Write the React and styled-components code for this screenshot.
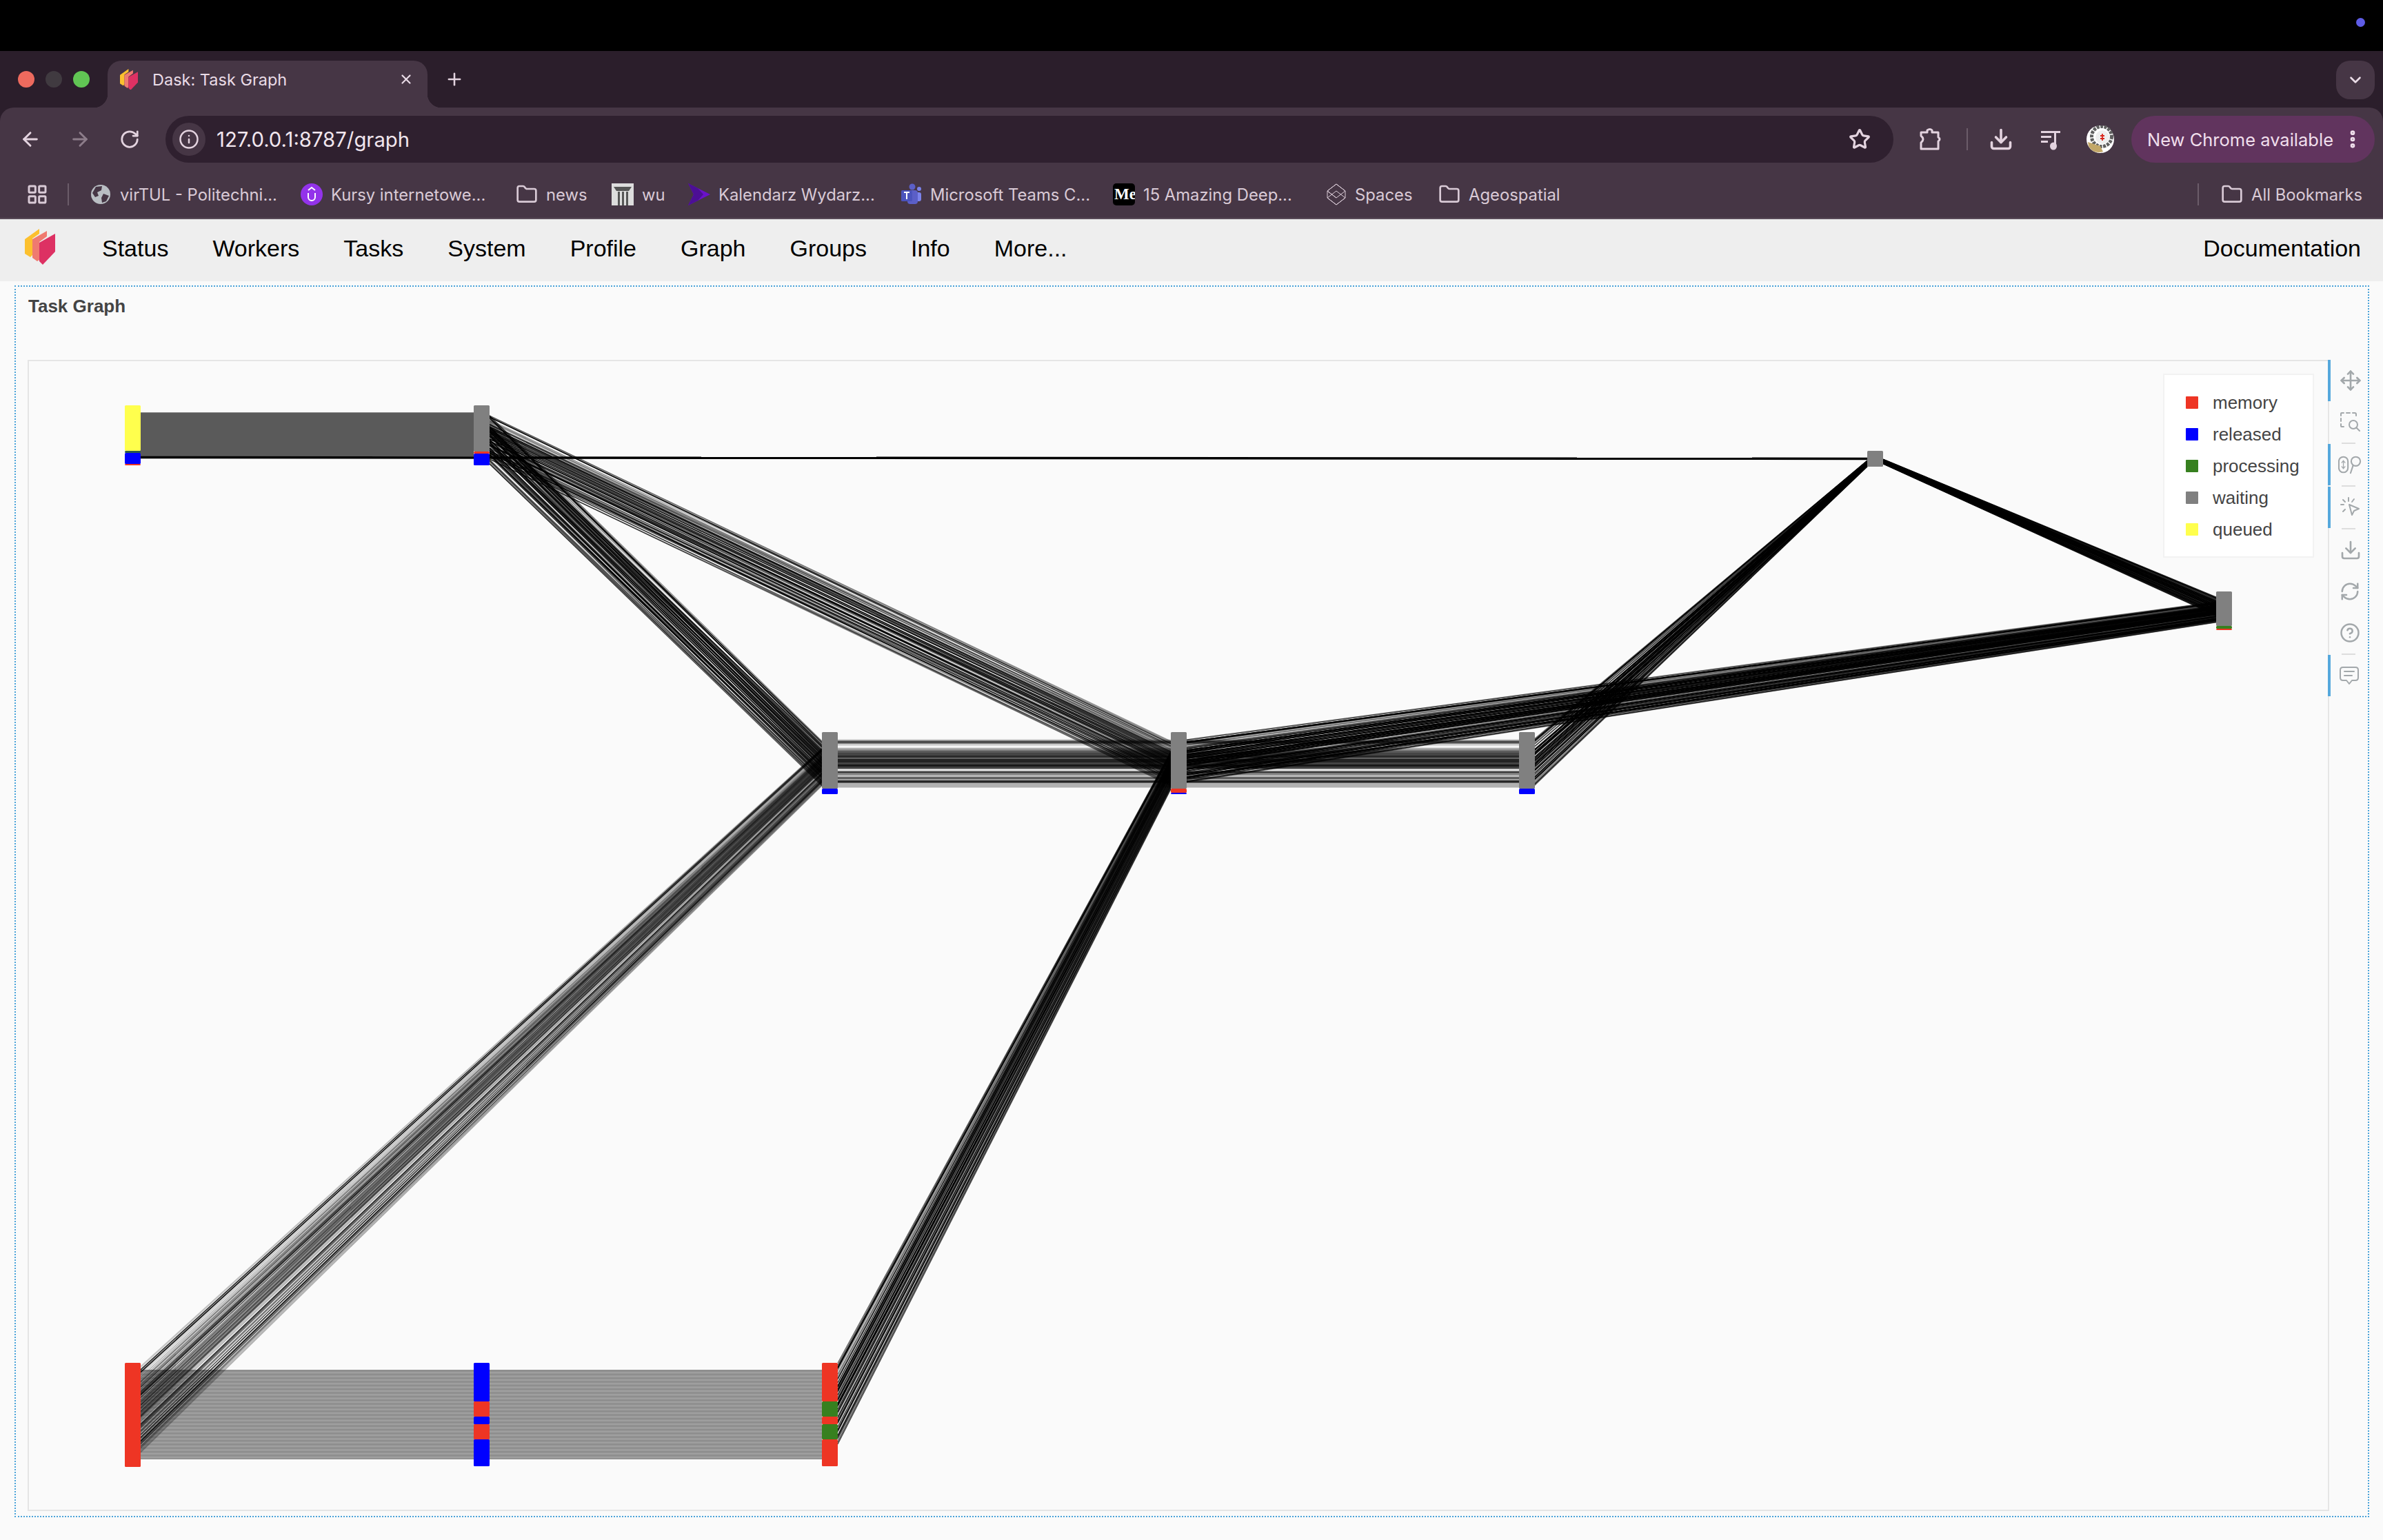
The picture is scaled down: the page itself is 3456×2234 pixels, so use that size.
import React from "react";
import styled, { createGlobalStyle } from "styled-components";
import {
  ArrowLeft,
  ArrowRight,
  RotateCw,
  Info,
  Star,
  Download,
  EllipsisVertical,
  ChevronDown,
  X,
  Plus,
  Folder,
  LayoutGrid,
  Move,
  RefreshCw,
  CircleHelp,
} from "lucide-react";

const CHROME_FONT = `Inter, "Liberation Sans", sans-serif`;
const PAGE_FONT = `"Liberation Sans", Arial, sans-serif`;

const GlobalStyle = createGlobalStyle`
  html, body {
    margin: 0;
    padding: 0;
    background: #fafafa;
    overflow: hidden;
  }
`;

const Screen = styled.div`
  width: 3456px;
  height: 2234px;
  display: flex;
  flex-direction: column;
  background: #fafafa;
`;

const MenuBar = styled.div`
  height: 74px;
  background: #000;
  display: flex;
  justify-content: flex-end;
  align-items: center;
  padding: 0 26px 10px 0;
  box-sizing: border-box;
`;

const RecordingDot = styled.span`
  width: 13px;
  height: 13px;
  border-radius: 50%;
  background: #5e5ce6;
`;

const TabStrip = styled.div`
  height: 82px;
  box-sizing: border-box;
  padding: 14px 12px 0 26px;
  background: #2b1e2b;
  display: flex;
  align-items: flex-start;
`;

const Lights = styled.div`
  height: 54px;
  display: flex;
  align-items: center;
  gap: 16px;
`;

const Light = styled.span`
  width: 24px;
  height: 24px;
  border-radius: 50%;
  background: ${(p) => p.$color};
`;

const Tab = styled.div`
  position: relative;
  width: 464px;
  height: 68px;
  margin-left: 26px;
  padding: 0 20px 14px 18px;
  box-sizing: border-box;
  display: flex;
  align-items: center;
  background: #463645;
  border-radius: 20px 20px 0 0;
  color: #eadce7;
  font: 23.5px ${CHROME_FONT};

  &::before,
  &::after {
    content: "";
    position: absolute;
    bottom: 0;
    width: 20px;
    height: 20px;
  }
  &::before {
    left: -20px;
    background: radial-gradient(circle at 0 0, transparent 20px, #463645 20.5px);
  }
  &::after {
    right: -20px;
    background: radial-gradient(circle at 100% 0, transparent 20px, #463645 20.5px);
  }
`;

const TabTitle = styled.span`
  margin-left: 21px;
  flex: 1;
`;

const NewTab = styled.div`
  width: 54px;
  height: 54px;
  margin-left: 12px;
  display: flex;
  align-items: center;
  justify-content: center;
  color: #e3d3df;
`;

const TabList = styled.div`
  width: 56px;
  height: 56px;
  margin-left: auto;
  border-radius: 20px;
  background: #463645;
  color: #eadce7;
  display: flex;
  align-items: center;
  justify-content: center;
`;

const Toolbar = styled.div`
  height: 80px;
  box-sizing: border-box;
  padding: 12px 12px 0 16px;
  display: flex;
  align-items: flex-start;
  background: #463645;
  color: #e3d3df;
`;

const ToolbarShell = styled.div`
  background: #2b1e2b;
`;

const ToolbarRound = styled.div`
  border-radius: 20px 20px 0 0;
  overflow: hidden;
`;

const NavButton = styled.div`
  width: 56px;
  height: 68px;
  margin-left: ${(p) => p.$ml || 0}px;
  display: flex;
  align-items: center;
  justify-content: center;
  flex-shrink: 0;
  opacity: ${(p) => (p.$dim ? 0.45 : 1)};
`;

const UrlBar = styled.div`
  width: 2506px;
  height: 68px;
  margin-left: 24px;
  padding: 0 33px 0 10px;
  box-sizing: border-box;
  flex-shrink: 0;
  display: flex;
  align-items: center;
  border-radius: 34px;
  background: #2f202f;
`;

const SiteInfo = styled.div`
  width: 48px;
  height: 48px;
  border-radius: 50%;
  background: #463645;
  display: flex;
  align-items: center;
  justify-content: center;
`;

const UrlText = styled.span`
  margin-left: 16px;
  flex: 1;
  color: #f1e6ee;
  font: 29.3px ${CHROME_FONT};
`;

const ToolbarDivider = styled.span`
  width: 2px;
  height: 32px;
  margin: 18px 20px 0 25px;
  background: #6b5c69;
  flex-shrink: 0;
`;

const Avatar = styled.svg`
  width: 40px;
  height: 40px;
  margin: 14px 0 0 23px;
  flex-shrink: 0;
`;

const UpdatePill = styled.div`
  width: 353px;
  height: 68px;
  margin-left: 25px;
  padding: 0 16px 0 23px;
  box-sizing: border-box;
  flex-shrink: 0;
  display: flex;
  align-items: center;
  justify-content: space-between;
  border-radius: 34px;
  background: #61345e;
  color: #f0dfec;
  font: 25.5px ${CHROME_FONT};
`;

const BookmarkBar = styled.div`
  height: 82px;
  box-sizing: border-box;
  padding: 12px 30px 0 38px;
  display: flex;
  align-items: center;
  background: #463645;
  border-bottom: 2px solid #5a4b59;
  color: #d9cad6;
  font: 23.8px ${CHROME_FONT};
`;

const BarDivider = styled.span`
  width: 2px;
  height: 32px;
  background: #6b5c69;
  margin: 0 ${(p) => p.$right}px 0 ${(p) => p.$left}px;
  flex-shrink: 0;
`;

const Bookmark = styled.div`
  width: ${(p) => (p.$w ? `${p.$w}px` : "auto")};
  flex-shrink: 0;
  display: flex;
  align-items: center;
  gap: 12px;
  white-space: nowrap;
`;

const MediumBadge = styled.span`
  width: 32px;
  height: 32px;
  border-radius: 5px;
  background: #000;
  color: #fff;
  overflow: hidden;
  font: bold 23px/32px "Liberation Serif", serif;
  padding-left: 2px;
  box-sizing: border-box;
  flex-shrink: 0;
`;

const AllBookmarks = styled.div`
  margin-left: auto;
  display: flex;
  align-items: center;
`;

const SiteNav = styled.nav`
  height: 90px;
  box-sizing: border-box;
  padding: 0 32px 6px 36px;
  display: flex;
  align-items: center;
  background: #eeeeee;
  font: 34px ${PAGE_FONT};
  color: #000;
`;

const NavLogo = styled.div`
  display: flex;
  margin-bottom: 4px;
`;

const NavLinks = styled.div`
  display: flex;
  gap: 64px;
  margin-left: 68px;
`;

const NavEnd = styled.span`
  margin-left: auto;
`;

const Main = styled.main`
  flex: 1;
  padding: 6px 20px 0 21px;
`;

const Panel = styled.section`
  height: 1787px;
  box-sizing: border-box;
  border: 2px dotted #4aa3d9;
  padding: 0 0 0 17px;
  display: flex;
  flex-direction: column;
`;

const PanelTitle = styled.h1`
  height: 106px;
  margin: 0;
  padding: 13px 0 0 1px;
  box-sizing: border-box;
  font: bold 26px/30px ${PAGE_FONT};
  color: #444;
`;

const GraphRow = styled.div`
  display: flex;
  height: 1670px;
`;

const PlotArea = styled.div`
  position: relative;
  width: 3336px;
  height: 100%;
  box-sizing: border-box;
  border: solid #e5e5e5;
  border-width: 2px 0 2px 2px;
`;

const Plot = styled.svg`
  display: block;
  width: 100%;
  height: 100%;
`;

const Legend = styled.div`
  position: absolute;
  top: 18px;
  right: 20px;
  width: 219px;
  height: 267px;
  box-sizing: border-box;
  padding: 17px 0 0 31px;
  background: #fff;
  border: 2px solid #f2f2f2;
  font: 26px/46px ${PAGE_FONT};
  color: #444;
`;

const LegendRow = styled.div`
  height: 46px;
  display: flex;
  align-items: center;
  gap: 21px;
`;

const Swatch = styled.span`
  width: 18px;
  height: 18px;
  border-radius: 1px;
  background: ${(p) => p.$color};
`;

const PlotTools = styled.div`
  width: 56px;
  height: 100%;
  box-sizing: border-box;
  border-left: 2px solid #e5e5e5;
  color: #a3a8ab;
  display: flex;
  flex-direction: column;
`;

const Tool = styled.div`
  height: 60px;
  margin-left: -2px;
  box-sizing: border-box;
  border-left: 4px solid ${(p) => (p.$active ? "#56a8dc" : "transparent")};
  padding-left: 13px;
  display: flex;
  align-items: center;
  flex-shrink: 0;
`;

const ToolGap = styled.span`
  width: 20px;
  height: 2px;
  margin-left: 18px;
  background: #dddddd;
  flex-shrink: 0;
`;

const COLORS = {
  memory: "#ee3524",
  released: "#0000ff",
  processing: "#37801f",
  waiting: "#808080",
  queued: "#ffff4d",
};

// stripes of the C-D-E ribbon, read from the reference: [share of height, alpha]
const STRIPES = [
  [0.03, 0.2], [0.03, 0.85], [0.03, 0.85], [0.05, 0.15], [0.04, 0.02], [0.03, 0.3],
  [0.03, 0.45], [0.06, 0.7], [0.05, 0.82], [0.05, 0.75], [0.04, 0.5], [0.07, 0.82],
  [0.05, 0.7], [0.05, 0.86], [0.05, 0.7], [0.04, 0.08], [0.02, 0.3], [0.04, 0.92],
  [0.05, 0.5], [0.04, 0.25], [0.05, 0.7], [0.03, 0.3], [0.05, 0.92], [0.1, 0.3],
];

function profile(t) {
  let sum = 0;
  const total = STRIPES.reduce((s, row) => s + row[0], 0);
  for (const [share, alpha] of STRIPES) {
    sum += share / total;
    if (t <= sum) return alpha;
  }
  return 0.3;
}

function makeRandom(seed) {
  let value = seed;
  return () => {
    value = (value * 1664525 + 1013904223) % 4294967296;
    return value / 4294967296;
  };
}

// one bundle of task edges between two node columns
function makeBundle({ a, b, n, floor = 0, gain = 1, width = 1.4, mix = 0, seed = 1 }) {
  const random = makeRandom(seed);
  const lines = [];
  for (let i = 0; i < n; i++) {
    const t = n === 1 ? 0.5 : i / (n - 1);
    const t2 = Math.min(1, Math.max(0, t + (random() - 0.5) * mix));
    const alpha = Math.min(1, floor + profile(t2) * gain);
    lines.push({
      x1: a[0],
      y1: a[1] + (a[2] - a[1]) * t2,
      x2: b[0],
      y2: b[1] + (b[2] - b[1]) * t,
      alpha,
      width,
    });
  }
  return lines;
}

function makeFlat(x1, x2, y1, y2, shade) {
  const lines = [];
  for (let y = y1; y < y2; y += 1) {
    lines.push({ x1, y1: y + 0.5, x2, y2: y + 0.5, alpha: shade(y), width: 1 });
  }
  return lines;
}

const EDGES = [
  ...makeFlat(204, 1192, 1987, 2117, (y) => 0.4 + 0.04 * Math.sin(y / 0.85)),
  ...makeFlat(188, 687, 599, 662, () => 0.64),
  ...makeFlat(204, 687, 598, 599, () => 0.45),
  ...makeBundle({ a: [204, 1982, 2107], b: [1192, 1085, 1140], n: 96, floor: 0.12, gain: 0.5, width: 1.2, mix: 0.05, seed: 3 }),
  ...makeBundle({ a: [1215, 1977, 2095], b: [1698, 1090, 1145], n: 84, floor: 0.3, gain: 0.6, width: 1.1, mix: 0.08, seed: 5 }),
  ...makeBundle({ a: [710, 603, 673], b: [1192, 1075, 1140], n: 70, floor: 0.3, gain: 0.7, width: 1.2, mix: 0.2, seed: 7 }),
  ...makeBundle({ a: [710, 603, 666], b: [1698, 1075, 1140], n: 84, floor: 0.18, gain: 0.7, width: 1.2, mix: 0.18, seed: 9 }),
  ...makeBundle({ a: [1215, 1073, 1142], b: [1698, 1073, 1142], n: 69, gain: 1.05, width: 1.1 }),
  ...makeBundle({ a: [1720, 1073, 1142], b: [2203, 1073, 1142], n: 69, gain: 1.05, width: 1.1 }),
  ...makeBundle({ a: [1720, 1073, 1135], b: [3214, 873, 903], n: 90, floor: 0.18, gain: 1.1, width: 1.2, mix: 0.04, seed: 11 }),
  ...makeBundle({ a: [2225, 1072, 1140], b: [2708, 668, 677], n: 70, floor: 0.25, gain: 1, width: 1.1, mix: 0.06, seed: 13 }),
  ...makeBundle({ a: [2731, 666, 673], b: [3214, 866, 893], n: 46, floor: 0.6, gain: 0.6, width: 1.1, seed: 15 }),
];

// node columns: x, then stacked state segments [state, height]
const NODES = [
  { x: 181, y: 588, w: 23, parts: [["queued", 66], ["#2a5a4a", 3], ["released", 16], ["memory", 2]] },
  { x: 687, y: 588, w: 23, parts: [["waiting", 67], ["memory", 3], ["released", 17]] },
  { x: 1192, y: 1062, w: 23, parts: [["waiting", 82], ["released", 8]] },
  { x: 1698, y: 1062, w: 23, parts: [["waiting", 82], ["memory", 6], ["released", 2]] },
  { x: 2203, y: 1062, w: 23, parts: [["waiting", 82], ["released", 8]] },
  { x: 2708, y: 654, w: 23, parts: [["waiting", 23]] },
  { x: 3214, y: 858, w: 23, parts: [["waiting", 50], ["processing", 4], ["memory", 2]] },
  { x: 181, y: 1977, w: 23, parts: [["memory", 151]] },
  { x: 687, y: 1977, w: 23, parts: [["released", 56], ["memory", 22], ["released", 11], ["memory", 22], ["released", 39]] },
  { x: 1192, y: 1977, w: 23, parts: [["memory", 56], ["processing", 22], ["memory", 11], ["processing", 22], ["memory", 39]] },
];

function TaskNode({ x, y, w, parts }) {
  let top = y;
  return parts.map(([state, h], i) => {
    const rect = (
      <rect key={i} x={x} y={top} width={w} height={h} rx={1.5} fill={COLORS[state] || state} />
    );
    top += h;
    return rect;
  });
}

function TaskGraph() {
  return (
    <Plot viewBox="42 524 3334 1666" preserveAspectRatio="none">
      {EDGES.map((line, i) => (
        <line
          key={i}
          x1={line.x1}
          y1={line.y1}
          x2={line.x2}
          y2={line.y2}
          stroke="#000"
          strokeOpacity={line.alpha}
          strokeWidth={line.width}
        />
      ))}
      <line x1={204} y1={663.5} x2={2708} y2={665.5} stroke="#000" strokeWidth={3.5} />
      {NODES.map((node, i) => (
        <TaskNode key={i} {...node} />
      ))}
    </Plot>
  );
}

function DaskLogo({ size }) {
  return (
    <svg width={size} height={(size * 52) / 44} viewBox="0 0 44 52" style={{ flexShrink: 0 }}>
      <polygon points="0,15 21,0 21,7 11,14 11,38 8,41 0,36" fill="#fcc02e" />
      <polygon points="11,15 32,3 32,11 21,19 21,45 18,47 11,42" fill="#ef7a70" />
      <polygon points="21,20 44,7 44,33 26,52 21,47" fill="#dd3163" />
    </svg>
  );
}

const GlobeIcon = () => (
  <svg width="32" height="32" viewBox="0 0 32 32" style={{ flexShrink: 0 }}>
    <circle cx="16" cy="16" r="14" fill="#b9bec3" />
    <path d="M9 5 L18 4 L17 10 L11 13 L13 18 L8 20 L4 14 Z" fill="#463645" />
    <path d="M20 15 L28 18 L24 26 L18 28 L17 21 Z" fill="#463645" />
  </svg>
);

const UdemyIcon = () => (
  <svg width="32" height="32" viewBox="0 0 32 32" style={{ flexShrink: 0 }}>
    <circle cx="16" cy="16" r="16" fill="#9333ea" />
    <path d="M11 14 V20 A5 5 0 0 0 21 20 V14" fill="none" stroke="#fff" strokeWidth="2" />
    <path d="M11 10 L16 6 L21 10" fill="none" stroke="#fff" strokeWidth="2" />
  </svg>
);

const ColumnIcon = () => (
  <svg width="32" height="32" viewBox="0 0 32 32" style={{ flexShrink: 0 }}>
    <rect width="32" height="32" fill="#ddd" />
    <path d="M3 5 H29 L25 11 H7 Z" fill="#555" />
    <rect x="9" y="12" width="3" height="20" fill="#555" />
    <rect x="15" y="12" width="3" height="20" fill="#555" />
    <rect x="21" y="12" width="3" height="20" fill="#555" />
  </svg>
);

const ChevronMark = () => (
  <svg width="32" height="32" viewBox="0 0 32 32" style={{ flexShrink: 0 }}>
    <path d="M0 0 L32 16 L0 32 L8 16 Z" fill="#6b12c9" />
    <path d="M0 0 L14 7 L22 16 L14 25 L0 32 L8 16 Z" fill="#4c0f96" />
  </svg>
);

const TeamsIcon = () => (
  <svg width="30" height="32" viewBox="0 0 30 32" style={{ flexShrink: 0 }}>
    <circle cx="16" cy="5" r="4.5" fill="#5b5fc7" />
    <circle cx="26" cy="8" r="3" fill="#7b83eb" />
    <rect x="21" y="13" width="8" height="13" rx="3" fill="#7b83eb" />
    <rect x="9" y="10" width="15" height="20" rx="4" fill="#5b5fc7" />
    <rect x="0" y="10" width="16" height="16" rx="1.5" fill="#4b53bc" />
    <path d="M4 13 H12 M8 13 V23" stroke="#fff" strokeWidth="2" />
  </svg>
);

const SpacesIcon = () => (
  <svg width="30" height="32" viewBox="0 0 30 32" fill="none" stroke="#d9cad6" strokeWidth="1" style={{ flexShrink: 0 }}>
    <path d="M15 1 L28 11 L28 21 L15 31 L2 21 L2 11 Z" />
    <path d="M15 1 L2 11 L15 21 L28 11 Z M2 11 L15 21 M15 11 L2 21 L15 31 L28 21 Z" />
  </svg>
);

const BoxZoomIcon = () => (
  <svg width="30" height="30" viewBox="0 0 30 30" fill="none" stroke="currentColor" strokeWidth="2" strokeLinecap="round">
    <path d="M2 6 V3 Q2 2 3 2 H6 M10 2 H15 M19 2 H22 Q24 2 24 4 V6 M2 10 V14 M2 18 V21 Q2 22 3 22 H6" />
    <circle cx="20" cy="19" r="6" />
    <path d="M24.5 23.5 L29 28" />
  </svg>
);

const WheelZoomIcon = () => (
  <svg width="34" height="30" viewBox="0 0 36 30" fill="none" stroke="currentColor" strokeWidth="2.2" strokeLinecap="round" style={{ marginLeft: -2 }}>
    <rect x="1" y="3" width="14" height="24" rx="7" />
    <path d="M8 9 L8 21 M5.5 12 L8 9 L10.5 12 M5.5 18 L8 21 L10.5 18" strokeWidth="1.4" />
    <circle cx="27" cy="10" r="7" />
    <path d="M23 16 L19 28" />
  </svg>
);

const TapIcon = () => (
  <svg width="30" height="30" viewBox="0 0 30 30" fill="none" stroke="currentColor" strokeWidth="2" strokeLinecap="round" strokeLinejoin="round">
    <path d="M13 1 V6 M2 11 H6 M5 4 L8 7 M21 3 L18 7 M5 21 L8 18" />
    <path d="M14 11 L28 17 L21 20 L18 26 Z" />
  </svg>
);

const CommentIcon = () => (
  <svg width="28" height="28" viewBox="0 0 28 28" fill="none" stroke="currentColor" strokeWidth="2" strokeLinejoin="round" strokeLinecap="round">
    <path d="M5 2 H23 Q27 2 27 6 V17 Q27 21 23 21 H18 L14 26 L10 21 H5 Q1 21 1 17 V6 Q1 2 5 2 Z" />
    <path d="M7 8 H21 M7 14 H18" />
  </svg>
);

const MediaIcon = () => (
  <svg width="32" height="32" viewBox="0 0 32 32" fill="#e3d3df">
    <rect x="1" y="4" width="20" height="3" />
    <rect x="1" y="11" width="15" height="3" />
    <rect x="1" y="18" width="10" height="3" />
    <rect x="21" y="4" width="8" height="3" />
    <rect x="20" y="4" width="3" height="20" />
    <ellipse cx="19" cy="26" rx="5" ry="5.5" />
  </svg>
);

const ExtensionIcon = () => (
  <svg width="34" height="34" viewBox="0 0 34 34" fill="none" stroke="#e3d3df" strokeWidth="3" strokeLinejoin="round">
    <path d="M4 7 H13 V4 Q17 1 20 4 V7 H29 V14 Q33 17 29 20 V31 H4 V22 Q10 17 4 12 Z" />
  </svg>
);

const ProfileAvatar = () => (
  <Avatar viewBox="0 0 40 40">
    <circle cx="20" cy="20" r="20" fill="#fff" />
    <circle cx="22" cy="16" r="14.5" fill="none" stroke="#5f5f5f" strokeWidth="5" strokeDasharray="4 1.5" />
    <circle cx="23" cy="17" r="10" fill="#eee" />
    <path d="M2 24 L20 30 L24 38 Q10 42 3 30 Z" fill="#c2a768" />
    <path d="M23 12 V22 M20 15 H26 M20 19 H26" stroke="#d9261c" strokeWidth="1.8" />
  </Avatar>
);

const NAV_ITEMS = ["Status", "Workers", "Tasks", "System", "Profile", "Graph", "Groups", "Info", "More..."];

const LEGEND = ["memory", "released", "processing", "waiting", "queued"];

const BOOKMARKS = [
  { w: 306, icon: <GlobeIcon />, label: "virTUL - Politechni..." },
  { w: 312, icon: <UdemyIcon />, label: "Kursy internetowe..." },
  { w: 139, icon: <Folder size={32} strokeWidth={2} />, label: "news" },
  { w: 111, icon: <ColumnIcon />, label: "wu" },
  { w: 309, icon: <ChevronMark />, label: "Kalendarz Wydarz..." },
  { w: 307, icon: <TeamsIcon />, label: "Microsoft Teams C..." },
  { w: 309, icon: <MediumBadge>Me</MediumBadge>, label: "15 Amazing Deep..." },
  { w: 163, icon: <SpacesIcon />, label: "Spaces" },
  { icon: <Folder size={32} strokeWidth={2} />, label: "Ageospatial" },
];

export default function App() {
  return (
    <Screen>
      <GlobalStyle />
      <MenuBar>
        <RecordingDot />
      </MenuBar>
      <TabStrip>
        <Lights>
          <Light $color="#ed6a5e" />
          <Light $color="#403a40" />
          <Light $color="#61c554" />
        </Lights>
        <Tab>
          <DaskLogo size={26} />
          <TabTitle>Dask: Task Graph</TabTitle>
          <X size={22} strokeWidth={2.4} />
        </Tab>
        <NewTab>
          <Plus size={28} strokeWidth={2.2} />
        </NewTab>
        <TabList>
          <ChevronDown size={26} strokeWidth={2.4} />
        </TabList>
      </TabStrip>
      <ToolbarShell>
        <ToolbarRound>
          <Toolbar>
            <NavButton>
              <ArrowLeft size={32} strokeWidth={2.2} />
            </NavButton>
            <NavButton $ml={16} $dim>
              <ArrowRight size={32} strokeWidth={2.2} />
            </NavButton>
            <NavButton $ml={16}>
              <RotateCw size={30} strokeWidth={2.2} />
            </NavButton>
            <UrlBar>
              <SiteInfo>
                <Info size={30} strokeWidth={2} />
              </SiteInfo>
              <UrlText>127.0.0.1:8787/graph</UrlText>
              <Star size={32} strokeWidth={2.4} />
            </UrlBar>
            <NavButton $ml={25}>
              <ExtensionIcon />
            </NavButton>
            <ToolbarDivider />
            <NavButton>
              <Download size={36} strokeWidth={2.4} />
            </NavButton>
            <NavButton $ml={17}>
              <MediaIcon />
            </NavButton>
            <ProfileAvatar />
            <UpdatePill>
              New Chrome available
              <EllipsisVertical size={32} strokeWidth={3} />
            </UpdatePill>
          </Toolbar>
        </ToolbarRound>
      </ToolbarShell>
      <BookmarkBar>
        <LayoutGrid size={32} strokeWidth={2.2} />
        <BarDivider $left={28} $right={30} />
        {BOOKMARKS.map((item) => (
          <Bookmark key={item.label} $w={item.w}>
            {item.icon}
            {item.label}
          </Bookmark>
        ))}
        <AllBookmarks>
          <BarDivider $left={0} $right={32} />
          <Bookmark>
            <Folder size={32} strokeWidth={2} />
            All Bookmarks
          </Bookmark>
        </AllBookmarks>
      </BookmarkBar>
      <SiteNav>
        <NavLogo>
          <DaskLogo size={44} />
        </NavLogo>
        <NavLinks>
          {NAV_ITEMS.map((item) => (
            <span key={item}>{item}</span>
          ))}
        </NavLinks>
        <NavEnd>Documentation</NavEnd>
      </SiteNav>
      <Main>
        <Panel>
          <PanelTitle>Task Graph</PanelTitle>
          <GraphRow>
            <PlotArea>
              <TaskGraph />
              <Legend>
                {LEGEND.map((state) => (
                  <LegendRow key={state}>
                    <Swatch $color={COLORS[state]} />
                    {state}
                  </LegendRow>
                ))}
              </Legend>
            </PlotArea>
            <PlotTools>
              <Tool $active>
                <Move size={32} strokeWidth={2} />
              </Tool>
              <Tool>
                <BoxZoomIcon />
              </Tool>
              <ToolGap />
              <Tool $active>
                <WheelZoomIcon />
              </Tool>
              <ToolGap />
              <Tool $active>
                <TapIcon />
              </Tool>
              <ToolGap />
              <Tool>
                <Download size={32} strokeWidth={2} />
              </Tool>
              <Tool>
                <RefreshCw size={30} strokeWidth={2} />
              </Tool>
              <Tool>
                <CircleHelp size={30} strokeWidth={2} />
              </Tool>
              <ToolGap />
              <Tool $active>
                <CommentIcon />
              </Tool>
            </PlotTools>
          </GraphRow>
        </Panel>
      </Main>
    </Screen>
  );
}
